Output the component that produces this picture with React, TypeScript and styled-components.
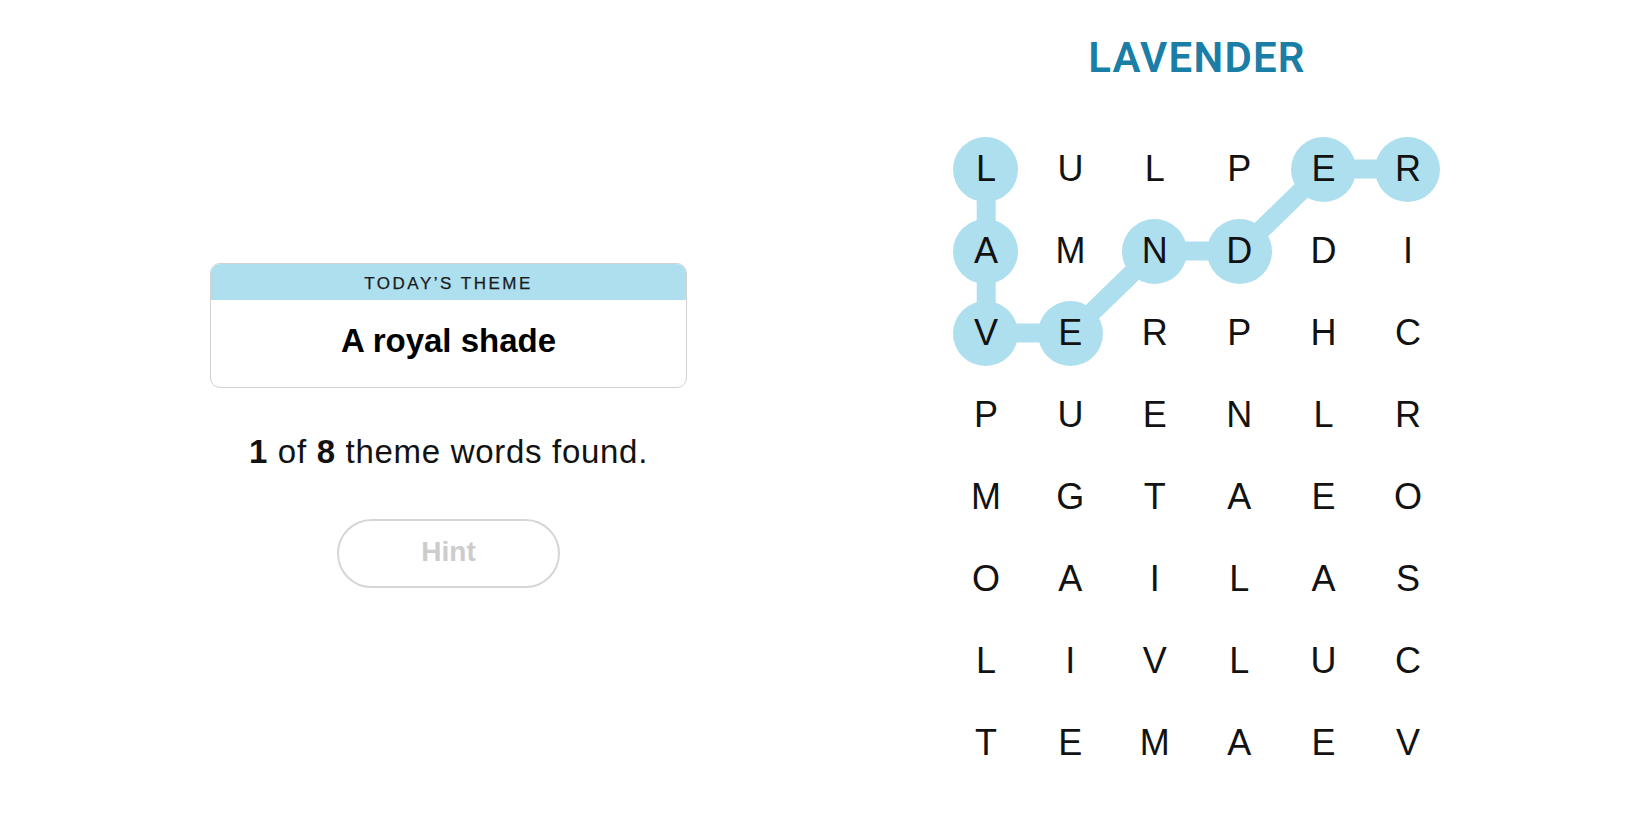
import React from "react";
import styled, { createGlobalStyle } from "styled-components";

const GlobalStyle = createGlobalStyle`
  html, body {
    margin: 0;
    padding: 0;
    background: #ffffff;
  }
  body {
    font-family: "Liberation Sans", Arial, sans-serif;
    color: #121212;
  }
  * { box-sizing: border-box; }
`;

const COL_W = 84.4;
const ROW_H = 82;
const CIRCLE = 65;

const Page = styled.div`
  display: flex;
  width: 1650px;
  height: 825px;
  overflow: hidden;
`;

const LeftPanel = styled.section`
  width: 897px;
  display: flex;
  flex-direction: column;
  align-items: center;
  padding-top: 263px;
`;

const ThemeCard = styled.div`
  width: 477px;
  border: 1px solid #d2d2d2;
  border-radius: 10px;
  overflow: hidden;
  display: flex;
  flex-direction: column;
`;

const ThemeHeader = styled.div`
  height: 36px;
  background: #aedfee;
  display: flex;
  align-items: center;
  justify-content: center;
  padding-top: 3px;
  font-size: 17px;
  letter-spacing: 2.5px;
  color: #1a1a1a;
  text-transform: uppercase;
  -webkit-text-stroke: 0.25px #1a1a1a;
`;

const ThemeBody = styled.div`
  height: 87px;
  display: flex;
  align-items: center;
  justify-content: center;
  padding-bottom: 6px;
  font-size: 33px;
  font-weight: 700;
  color: #000;
`;

const Progress = styled.p`
  margin: 44px 0 0;
  font-size: 33px;
  line-height: 1.2;
  letter-spacing: 0.7px;
  color: #121212;

  b {
    font-weight: 700;
  }
`;

const HintButton = styled.button`
  margin-top: 47px;
  width: 223px;
  height: 69px;
  border-radius: 35px;
  border: 2px solid #d6d6d6;
  background: #fff;
  color: #cccccc;
  font-family: "Liberation Sans", Arial, sans-serif;
  font-size: 28px;
  font-weight: 700;
  display: flex;
  align-items: center;
  justify-content: center;
  padding: 0 0 2px;
  cursor: default;
`;

const RightPanel = styled.section`
  width: 600px;
  display: flex;
  flex-direction: column;
  align-items: center;
  padding-top: 33px;
`;

const FoundWord = styled.h1`
  margin: 0;
  font-family: Roboto, "Liberation Sans", sans-serif;
  font-size: 42px;
  line-height: 1.2;
  font-weight: 600;
  color: #1b7ea6;
  letter-spacing: 1.2px;
`;

const BoardWrap = styled.div`
  position: relative;
  margin-top: 45px;
  width: ${COL_W * 6}px;
  height: ${ROW_H * 8}px;
`;

const Connectors = styled.svg`
  position: absolute;
  inset: 0;
  width: 100%;
  height: 100%;
  z-index: 0;
  pointer-events: none;
`;

const LetterGrid = styled.div`
  position: relative;
  z-index: 1;
  display: grid;
  grid-template-columns: repeat(6, ${COL_W}px);
  grid-template-rows: repeat(8, ${ROW_H}px);
`;

const Cell = styled.div`
  display: flex;
  align-items: center;
  justify-content: center;
`;

const Letter = styled.span<{ $selected?: boolean }>`
  width: ${CIRCLE}px;
  height: ${CIRCLE}px;
  border-radius: 50%;
  background: ${(p) => (p.$selected ? "#aedfee" : "transparent")};
  display: flex;
  align-items: center;
  justify-content: center;
  font-family: "Liberation Sans", Arial, sans-serif;
  font-size: 36px;
  line-height: 1;
  color: #121212;
  text-transform: uppercase;
`;

const ROWS = [
  "LULPER",
  "AMNDDI",
  "VERPHC",
  "PUENLR",
  "MGTAEO",
  "OAILAS",
  "LIVLUC",
  "TEMAEV",
];

const PATH: [number, number][] = [
  [0, 0],
  [0, 1],
  [0, 2],
  [1, 2],
  [2, 1],
  [3, 1],
  [4, 0],
  [5, 0],
];

const isSelected = (c: number, r: number) =>
  PATH.some(([pc, pr]) => pc === c && pr === r);

const cx = (c: number) => c * COL_W + COL_W / 2;
const cy = (r: number) => r * ROW_H + ROW_H / 2;

export default function App() {
  const points = PATH.map(([c, r]) => `${cx(c)},${cy(r)}`).join(" ");
  return (
    <>
      <GlobalStyle />
      <Page>
        <LeftPanel>
          <ThemeCard>
            <ThemeHeader>Today’s Theme</ThemeHeader>
            <ThemeBody>A royal shade</ThemeBody>
          </ThemeCard>
          <Progress>
            <b>1</b> of <b>8</b> theme words found.
          </Progress>
          <HintButton>Hint</HintButton>
        </LeftPanel>
        <RightPanel>
          <FoundWord>LAVENDER</FoundWord>
          <BoardWrap>
            <Connectors viewBox={`0 0 ${COL_W * 6} ${ROW_H * 8}`}>
              <polyline
                points={points}
                fill="none"
                stroke="#aedfee"
                strokeWidth={19}
                strokeLinejoin="round"
                strokeLinecap="round"
              />
            </Connectors>
            <LetterGrid>
              {ROWS.map((row, r) =>
                row.split("").map((ch, c) => (
                  <Cell key={`${r}-${c}`}>
                    <Letter $selected={isSelected(c, r)}>{ch}</Letter>
                  </Cell>
                ))
              )}
            </LetterGrid>
          </BoardWrap>
        </RightPanel>
      </Page>
    </>
  );
}
